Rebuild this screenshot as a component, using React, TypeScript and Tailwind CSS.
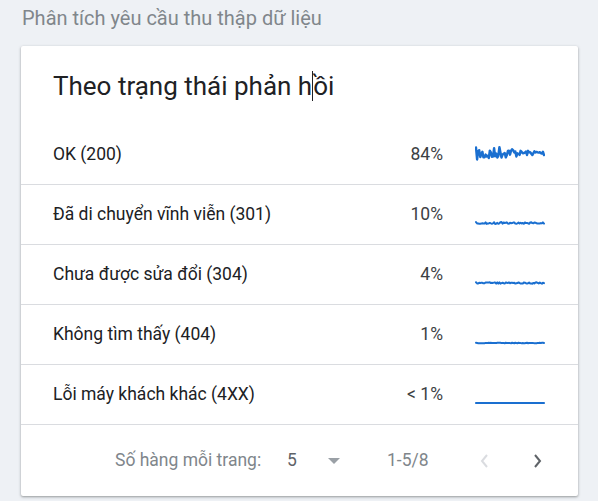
import React from "react";

function seeded(seed: number) {
  let s = seed;
  return () => {
    s = (s * 16807) % 2147483647;
    return (s - 1) / 2147483646;
  };
}

function makePath(seed: number, base: number, amp: number, profile?: (i: number, n: number) => number, baseFn?: (i: number, n: number) => number) {
  const r = seeded(seed);
  const n = 64;
  const w = 68;
  let d = "";
  for (let i = 0; i <= n; i++) {
    const x = 1 + (i / n) * w;
    const a = profile ? profile(i, n) : amp;
    const b = baseFn ? baseFn(i, n) : base;
    const y = b + (r() - 0.5) * 2 * a;
    d += (i === 0 ? "M" : "L") + x.toFixed(1) + " " + y.toFixed(1) + " ";
  }
  return d;
}

const paths = [
  makePath(
    7,
    12,
    4,
    (i, n) => {
      const t = i / n;
      if (t < 0.45) return 6.5;
      if (t < 0.6) return 4;
      return 2.5;
    },
    (i, n) => {
      const t = i / n;
      if (t < 0.3) return 13;
      if (t < 0.55) return 11;
      return 12;
    }
  ),
  makePath(13, 17, 0.9),
  makePath(29, 17, 0.7),
  makePath(41, 17, 0.25),
  makePath(53, 17, 0.15),
];

const rows = [
  { label: "OK (200)", pct: "84%" },
  { label: "Đã di chuyển vĩnh viễn (301)", pct: "10%" },
  { label: "Chưa được sửa đổi (304)", pct: "4%" },
  { label: "Không tìm thấy (404)", pct: "1%" },
  { label: "Lỗi máy khách khác (4XX)", pct: "< 1%" },
];

function Spark({ d, first }: { d: string; first: boolean }) {
  return (
    <svg width="70" height="24" viewBox="0 0 70 24" className={first ? "-mt-[4px]" : "mt-[6px]"}>
      <path d={d} fill="none" stroke="#1a6fd0" strokeWidth={first ? 2.4 : 2} strokeLinejoin="round" strokeLinecap="round" />
    </svg>
  );
}

export default function App() {
  return (
    <div className="w-[598px] h-[501px] bg-[#eef1f5] overflow-hidden font-['Roboto',sans-serif]">
      <div className="pl-[22px] pt-[5px] h-[46px] text-[20px] text-[#80868b] leading-[26px]">
        Phân tích yêu cầu thu thập dữ liệu
      </div>
      <div className="ml-[21px] w-[557px] h-[450px] bg-white rounded-[2px] shadow-[0_1px_3px_rgba(60,64,67,0.35),0_1px_2px_rgba(60,64,67,0.2)] flex flex-col">
        <div className="h-[79px] pl-[32px] pt-[23px] text-[26px] leading-[34px] text-[#202124]">
          Theo trạng thái phản h<span className="border-l border-[#202124]">ồ</span>i
        </div>
        {rows.map((r, i) => (
          <div
            key={i}
            className="h-[60px] flex items-center border-b border-[#dadce0] text-[17.5px] text-[#202124] pr-[32px]"
          >
            <div className="pl-[32px] flex-1">{r.label}</div>
            <div className="w-[100px] text-right text-[#3c4043]">{r.pct}</div>
            <div className="w-[103px] pl-[32px] flex items-center">
              <Spark d={paths[i]} first={i === 0} />
            </div>
          </div>
        ))}
        <div className="flex-1 flex items-center text-[17.5px] text-[#5f6368]">
          <div className="pl-[94px] w-[266px] text-[#80868b]">Số hàng mỗi trang:</div>
          <div className="w-[30px] text-[#5f6368]">5</div>
          <svg width="14" height="8" viewBox="0 0 14 8" className="ml-[10px]">
            <path d="M1 1 L7 7 L13 1 Z" fill="#9aa0a6" />
          </svg>
          <div className="ml-[46px] text-[#80868b]">1-5/8</div>
          <svg width="10" height="16" viewBox="0 0 10 16" className="ml-[50px]">
            <path d="M8 2 L3 8 L8 14" fill="none" stroke="#dadce0" strokeWidth="2" />
          </svg>
          <svg width="10" height="16" viewBox="0 0 10 16" className="ml-[44px]">
            <path d="M2 2 L7 8 L2 14" fill="none" stroke="#5f6368" strokeWidth="2" />
          </svg>
        </div>
      </div>
    </div>
  );
}
